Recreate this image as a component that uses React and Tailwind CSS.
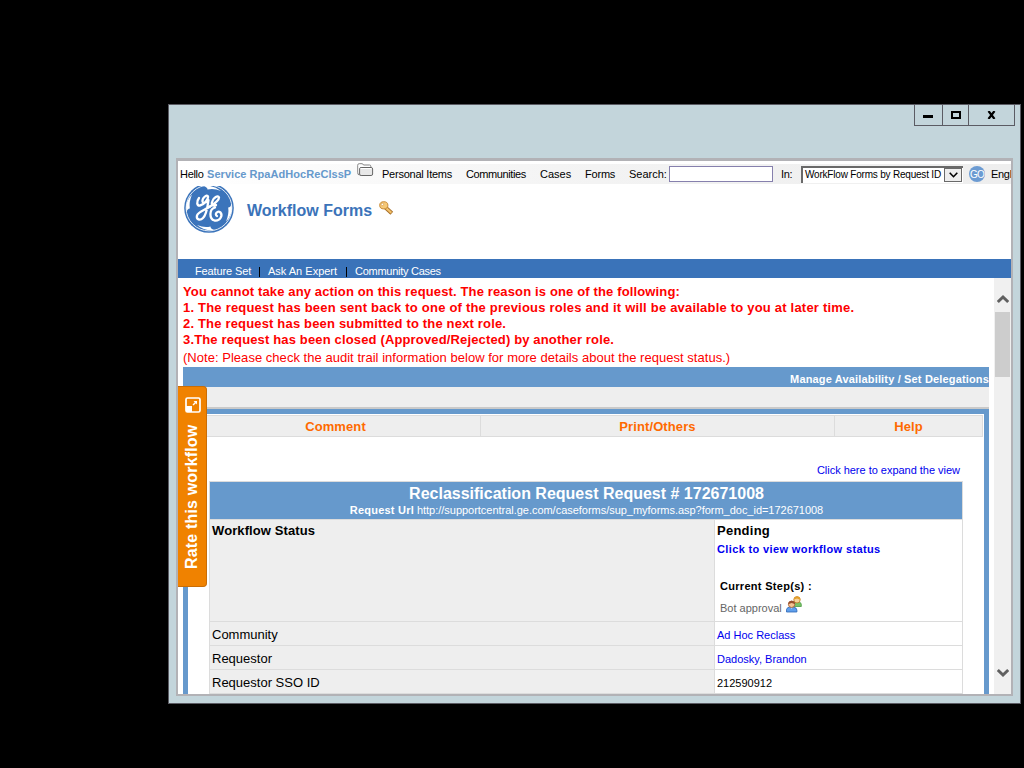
const sans = "font-['Liberation_Sans',Arial,sans-serif]";

function Key() {
  return (
    <svg width="15" height="15" viewBox="0 0 15 15" className="block">
      <path d="M6.500 6.500L12.800 12.300" stroke="#a8702a" strokeWidth="4" />
      <path d="M9 10.500L10.500 9M11 12.500L12.500 11" stroke="#a8702a" strokeWidth="1" />
      <path d="M6 6L12.300 11.800" stroke="#f3c16a" strokeWidth="2.200" />
      <ellipse cx="4.800" cy="4.300" rx="4.100" ry="3.600" fill="#f5c877" stroke="#c98c38" />
      <circle cx="3.400" cy="3.400" r="1.200" fill="#fff" stroke="#cf8f35" strokeWidth=".6" />
    </svg>
  );
}

function Folder() {
  return (
    <svg width="17" height="14" viewBox="0 0 17 14" className="block">
      <path d="M.7 9.500V2.200Q.7.700 2.200.700H5q1 0 1.500 1.300h6q1.300 0 1.300 1.300V5" fill="#fff" stroke="#888" />
      <path d="M.7 9.500Q.7 12 2.500 12" fill="none" stroke="#777" />
      <rect x="2.600" y="4.500" width="13" height="8" rx="1.500" fill="#e8e8e8" stroke="#666" />
      <path d="M3.500 5.500h11" stroke="#fff" />
    </svg>
  );
}

function Logo() {
  return (
    <svg width="52" height="49" viewBox="0 0 52 49" className="block">
      <circle cx="26" cy="22" r="24.800" fill="#3b74bb" />
      <circle cx="26" cy="22" r="22.900" fill="none" stroke="#dfe9f5" strokeWidth="1" />
      <g fill="#fff">
        <path d="M3.500 26Q1.500 16 9 8.500Q5.800 16 6.800 22.500Q4.500 22.500 3.500 26Z" />
        <path d="M48.500 18Q50.500 28 43 35.500Q46.200 28 45.200 21.500Q47.500 21.500 48.500 18Z" />
        <path d="M20 0Q30 -1.500 38 5Q31 2 24.500 3.500Q24.500 1 20 0Z" />
        <path d="M32 44Q22 45.500 14 39Q21 42 27.500 40.500Q27.500 43 32 44Z" />
      </g>
      <g fill="none" stroke="#fff" strokeWidth="2.300" strokeLinecap="round" strokeLinejoin="round">
        <path d="M16 12C13 16 14 20 17 19.500C21 19 25.500 13 25 10.500C24 8 19 12 19.500 15.500C20 18 25 16 25.500 14C24.500 20 24 28 20 32C17 35 13 33.500 14 29.500C15 25.500 22 24 27 20.500" />
        <path d="M27 20.500C31 18 36 14 36 11.500C35.500 8.500 30 11.500 29 16C28 20 32 20.500 33 19M32 21.500C26 23 26 33 31.500 34.500C37 35.500 40 29.500 37.500 26.500C34.500 24 31 28.500 34 30" />
      </g>
    </svg>
  );
}

function People() {
  return (
    <svg width="16" height="17" viewBox="0 0 16 17" className="block">
      <path d="M7.500 10.500V8Q8 6 10 6H13Q15.300 6.500 15.300 8.500V10.500Z" fill="#79c366" stroke="#4d9a45" strokeWidth=".8" />
      <circle cx="11" cy="3.800" r="3.200" fill="#f8d29a" stroke="#bd7a25" strokeWidth=".8" />
      <path d="M7.600 3.600Q8.300.400 11.500.500Q14.600 1 14.400 3.800L11 2.600Z" fill="#e3a02c" />
      <path d="M.5 16V13.500Q1 11.300 3.500 11.200H7.500Q10.700 11.500 10.900 14V16Z" fill="#5f9fec" stroke="#2c66b5" strokeWidth=".8" />
      <path d="M4.800 11.500L5.600 12.800L6.600 11.500Z" fill="#fff" />
      <circle cx="5.600" cy="8.300" r="3.200" fill="#f5c393" stroke="#a0592f" strokeWidth=".8" />
      <path d="M2.100 8.300Q2.600 4.700 5.700 4.700Q8.900 4.900 9.200 8.300L5.700 7Z" fill="#9a4f2c" />
    </svg>
  );
}

function Chevron({ down }) {
  return (
    <svg width="12" height="10" viewBox="0 0 12 10" className="block">
      <path d={down ? "M.8 2L6 7L11.200 2" : "M.8 8L6 3L11.200 8"} fill="none" stroke="#606060" strokeWidth="3" />
    </svg>
  );
}

function Row({ label, children }) {
  return (
    <div className="flex h-6 border-b border-[#dcdcdc]">
      <div className="w-[505px] border-r border-[#dcdcdc] bg-[#eee] pl-[2px] text-[13px] leading-[26px]">{label}</div>
      <div className="pl-[2px] text-[11px] leading-[27px]">{children}</div>
    </div>
  );
}

export default function App() {
  return (
    <div className={`${sans} h-[768px] w-[1024px] overflow-hidden bg-black pl-[168px] pt-[104px] text-black [&_*]:whitespace-nowrap`}>
      <div className="flex h-[600px] w-[853px] flex-col border border-[#5b5b63] bg-[#c3d5db]">
        <div className="flex h-[53px] justify-end pr-[5px]">
          <div className="flex h-[21px] w-[101px] border-x border-b border-[#5b5b63]">
            <div className="flex w-[28px] items-center justify-center border-r border-[#5b5b63] pr-px">
              <div className="mt-[3px] h-[3px] w-[10px] bg-black" />
            </div>
            <div className="flex w-[26px] items-center justify-center border-r border-[#5b5b63]">
              <div className="h-2 w-[10px] border-2 border-black" />
            </div>
            <div className="flex grow items-center justify-center">
              <svg width="9" height="8" viewBox="0 0 9 8"><path d="M1.500 0L7.500 8M7.500 0L1.500 8" stroke="#000" strokeWidth="2.200" /></svg>
            </div>
          </div>
        </div>
        <div className="ml-[7px] flex h-[538px] w-[837px] flex-col border-2 border-t-[3px] border-[#b2b2b6] bg-white">
          <div className="mt-[3px] flex h-5 w-[833px] shrink-0 items-center overflow-x-clip bg-linear-to-r from-white via-[#f3f3f3] to-[#eee] pl-[2px] text-[11px] leading-[20px]">
            <span className="w-[27px] shrink-0 tracking-[-0.3px]">Hello</span>
            <span className="w-[150px] shrink-0 font-bold tracking-[0.05px] text-[#6699cc]">Service RpaAdHocReClssP</span>
            <span className="-mt-[8px] w-[25px] shrink-0"><Folder /></span>
            <span className="w-[84px] shrink-0 tracking-[-0.24px]">Personal Items</span>
            <span className="w-[74px] shrink-0 tracking-[-0.4px]">Communities</span>
            <span className="w-[45px] shrink-0">Cases</span>
            <span className="w-[44px] shrink-0 tracking-[-0.2px]">Forms</span>
            <span className="w-[40px] shrink-0">Search:</span>
            <span className="h-4 w-[104px] shrink-0 border border-[#8680ad] bg-white" />
            <span className="ml-2 w-[20px] shrink-0 tracking-[-0.3px]">In:</span>
            <span className="flex h-[17px] w-[162px] shrink-0 border-t-2 border-l-2 border-[#696969] bg-white pl-[2px] text-[10px] leading-[14px]">
              <span className="w-[139px] shrink-0 tracking-[-0.2px]">WorkFlow Forms by Request ID</span>
              <span className="flex h-[14px] w-[18px] shrink-0 items-center justify-center border border-[#696969] bg-[#eee]">
                <svg width="9" height="6" viewBox="0 0 9 6"><path d="M.7.700L4.500 4.700L8.300.700" fill="none" stroke="#000" strokeWidth="1.600" /></svg>
              </span>
            </span>
            <span className="mr-[6px] ml-[6px] h-4 w-4 shrink-0 rounded-full bg-[#6c9bd2] text-center text-[10px] leading-[17px] tracking-[-0.9px] text-white">GO</span>
            <span className="shrink-0 tracking-[-0.3px]">Engl</span>
          </div>
          <div className="flex h-[75px] shrink-0 pl-[5px]">
            <div className="mt-[2px] w-16"><Logo /></div>
            <div className="mt-[15px] w-[132px] text-[16px] leading-[24px] font-bold text-[#3b73b9]">Workflow Forms</div>
            <div className="mt-[17px]"><Key /></div>
          </div>
          <div className="flex h-[19px] shrink-0 items-center bg-[#3a73b9] pl-[17px] text-[11px] leading-[19px] text-white">
            <span className="mt-[5px] w-[64px] tracking-[-0.12px]">Feature Set</span>
            <span className="mt-[6px] mr-2 h-[10px] w-px bg-black" />
            <span className="mt-[5px] w-[78px]">Ask An Expert</span>
            <span className="mt-[6px] mr-2 h-[10px] w-px bg-black" />
            <span className="mt-[5px] tracking-[-0.27px]">Community Cases</span>
          </div>
          <div className="relative flex h-[416px] overflow-hidden">
            <div className="w-[816px] shrink-0 pl-[5px]">
              <div className="h-[89px] pt-[6px] text-[13px] leading-[16px] font-bold text-[#fe0000]">
                <p className="tracking-[0.14px]">You cannot take any action on this request. The reason is one of the following:</p>
                <p className="tracking-[0.207px]">1. The request has been sent back to one of the previous roles and it will be available to you at later time.</p>
                <p className="tracking-[0.175px]">2. The request has been submitted to the next role.</p>
                <p className="tracking-[0.15px]">3.The request has been closed (Approved/Rejected) by another role.</p>
                <p className="pt-[2px] font-normal tracking-[0.032px]">(Note: Please check the audit trail information below for more details about the request status.)</p>
              </div>
              <div className="w-[806px]">
                <div className="h-5 overflow-hidden bg-[#6699cc] text-right text-[11px] leading-[25px] font-bold tracking-[0.16px] text-white">Manage Availability / Set Delegations</div>
                <div className="h-[22px] border-b-2 border-[#c9c9c9] bg-[#eee]" />
                <div className="h-[300px] border-x-[5px] border-t-[5px] border-[#6699cc] pt-px">
                  <div className="flex h-[22px] w-[795px] border border-[#dcdcdc] bg-[#eee] text-center text-[13px] leading-[21px] font-bold tracking-[0.1px] text-[#ff6a00]">
                    <div className="w-[292px] border-r border-[#dcdcdc] pl-[2px]">Comment</div>
                    <div className="w-[354px] border-r border-[#dcdcdc]">Print/Others</div>
                    <div className="grow">Help</div>
                  </div>
                  <div className="h-[44px] w-[772px] pt-[21px] text-right text-[11px] leading-[25px] tracking-[-0.02px] text-[#0000ee]">Click here to expand the view</div>
                  <div className="ml-[21px] w-[754px] border border-b-0 border-[#dcdcdc]">
                    <div className="h-[38px] border-b border-[#dcdcdc] bg-[#6699cc] text-center text-white">
                      <div className="h-[21px] pl-px text-[16px] leading-[23px] font-bold">Reclassification Request Request # 172671008</div>
                      <div className="pl-px text-[11px] leading-[14px] tracking-[-0.025px]"><b className="tracking-[0.22px]">Request Url</b> http://supportcentral.ge.com/caseforms/sup_myforms.asp?form_doc_id=172671008</div>
                    </div>
                    <div className="flex h-[102px] border-b border-[#dcdcdc]">
                      <div className="w-[505px] border-r border-[#dcdcdc] bg-[#eee] pt-[2px] pl-[2px] text-[13px] leading-[18px] font-bold tracking-[0.1px]">Workflow Status</div>
                      <div className="pt-[2px] pl-[2px] font-bold">
                        <div className="text-[13px] leading-[18px] tracking-[0.25px]">Pending</div>
                        <div className="text-[11px] leading-[19px] tracking-[0.37px] text-[#0000f0]">Click to view workflow status</div>
                        <div className="mt-[18px] pl-[3px] text-[11px] leading-[19px] tracking-[0.3px]">Current Step(s) :</div>
                        <div className="flex pl-[3px] text-[11px] leading-[24px] font-normal text-[#666]">
                          <span className="w-[66px]">Bot approval</span><People />
                        </div>
                      </div>
                    </div>
                    <Row label="Community"><span className="text-[#0000ee]">Ad Hoc Reclass</span></Row>
                    <Row label="Requestor"><span className="text-[#0000ee]">Dadosky, Brandon</span></Row>
                    <Row label="Requestor SSO ID">212590912</Row>
                  </div>
                </div>
              </div>
            </div>
            <div className="flex w-[17px] shrink-0 flex-col items-center bg-[#f0f0f0] pt-4">
              <Chevron />
              <div className="mt-2 h-[65px] w-[15px] bg-[#cdcdcd]" />
              <div className="mt-auto mb-[16px]"><Chevron down /></div>
            </div>
            <div className="absolute top-[108px] left-0 flex h-[201px] w-[29px] flex-col items-center rounded-r border border-l-0 border-[#c96d06] bg-[#f08200] pt-[10px]">
              <svg width="16" height="16" viewBox="0 0 16 16" className="ml-px shrink-0">
                <rect x="1" y="1" width="14" height="14" rx="1.500" fill="none" stroke="#fff" strokeWidth="1.700" />
                <path d="M1 9H7V15H1ZM8.500 4H12V7.500L10.800 6.300L8.500 8.500L7.500 7.500L9.800 5.200Z" fill="#fff" />
              </svg>
              <span className="mt-[10px] h-[146px] rotate-180 text-[16px] leading-[26px] font-bold tracking-[0.17px] text-white [writing-mode:vertical-rl]">Rate this workflow</span>
            </div>
          </div>
        </div>
      </div>
    </div>
  );
}
